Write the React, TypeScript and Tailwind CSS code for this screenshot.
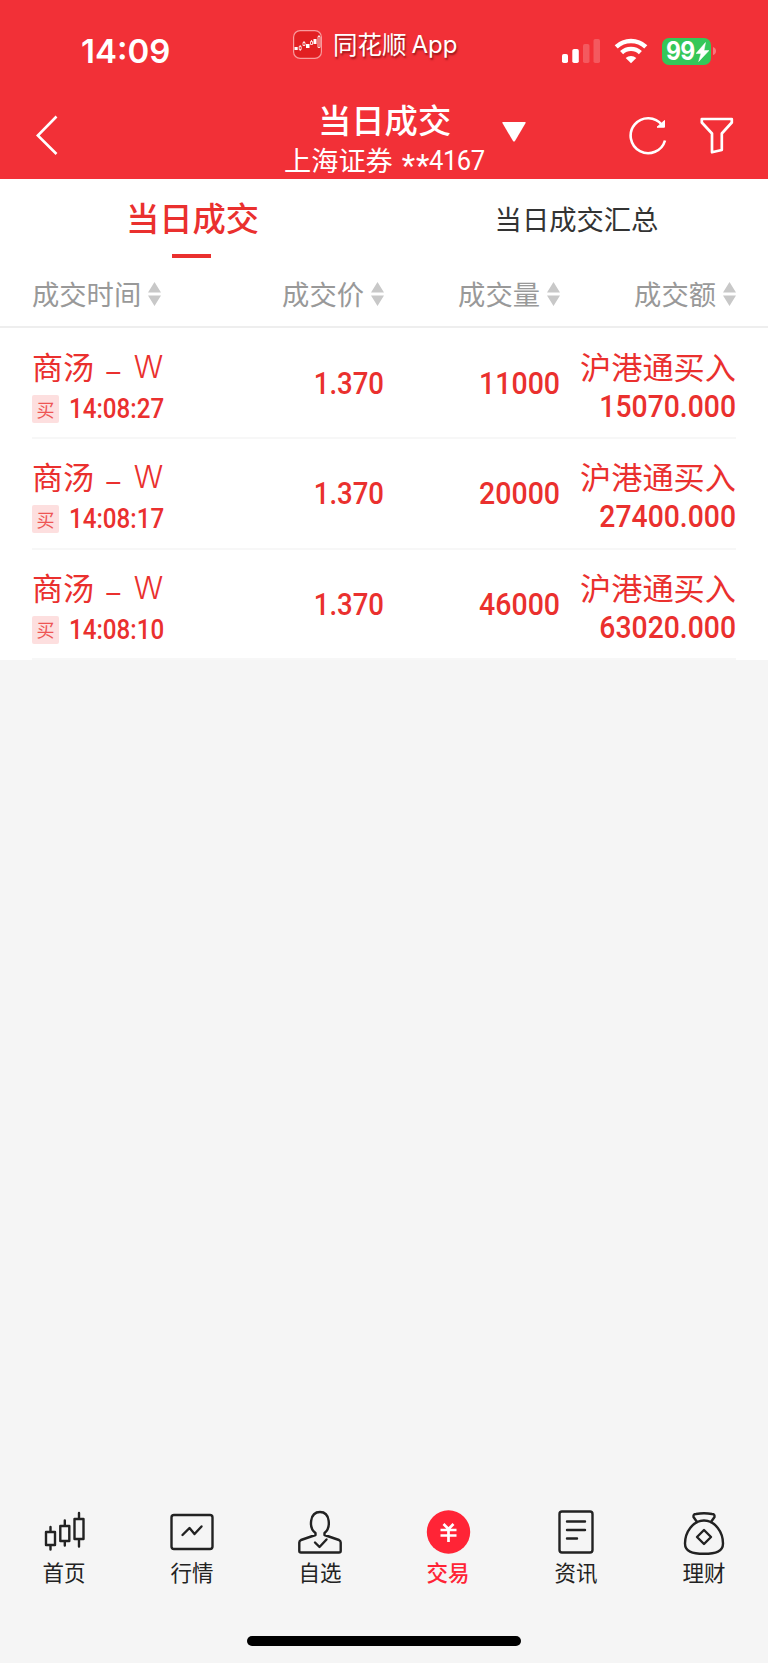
import type { ReactNode } from "react";

const trades = [
  { id: 1, name: "商汤", suffix: "W", time: "14:08:27", price: "1.370", volume: "11000", type: "沪港通买入", amount: "15070.000" },
  { id: 2, name: "商汤", suffix: "W", time: "14:08:17", price: "1.370", volume: "20000", type: "沪港通买入", amount: "27400.000" },
  { id: 3, name: "商汤", suffix: "W", time: "14:08:10", price: "1.370", volume: "46000", type: "沪港通买入", amount: "63020.000" },
];

function StatusBar() {
  return (
    <div className="flex h-[100px] text-white">
      <div className="w-[293px] pl-[81px] pt-[31px] font-['Inter'] text-[33px] leading-[40px] font-semibold">14:09</div>
      <div className="flex w-[269px] pt-[30px]">
        <svg width="29" height="29" viewBox="0 0 29 29" fill="none">
          <rect x="0.6" y="0.6" width="27.8" height="27.8" rx="6.5" fill="#e21f22" stroke="#f99a9c" strokeWidth="1.2" />
          <path d="M1.500 17h3.200v3H1.500zM13 14h3.500v4H13zM20.500 9h3v5h-3z" fill="white" />
          <path d="M6.200 16.500h2v3h-2zM7.200 15v1.500M7.200 19.500v1.500M10 12.500h2v3h-2zM11 11v1.500M17.500 11.500h2v3h-2zM18.500 10v1.500M25 6.500h2v11h-2zM26 5v1.500" stroke="white" strokeWidth="0.8" />
        </svg>
        <div className="flex gap-[5px] pl-[11px] text-[24.5px] leading-[28px] [text-shadow:1px_2px_2px_rgba(70,0,0,0.55)]">
          <span>同花顺</span>
          <span className="font-['Inter'] text-[24px] leading-[30px]">App</span>
        </div>
      </div>
      <svg className="mt-[38px]" width="38" height="26" viewBox="0 0 38 26" fill="white">
        <rect x="0" y="16" width="6" height="9" rx="1.8" />
        <rect x="10.300" y="11" width="6.500" height="14" rx="1.800" />
        <rect x="21" y="6" width="6.500" height="19" rx="1.800" opacity="0.2" />
        <rect x="31.500" y="1" width="6.500" height="24" rx="1.800" opacity="0.2" />
      </svg>
      <svg className="mt-[38px] ml-[14px]" width="34" height="26" viewBox="0 0 34 26" fill="none" stroke="white" strokeWidth="4.400">
        <path d="M2.200 8.900a21.500 21.500 0 0 1 29.600 0" />
        <path d="M7.600 14.600a13.600 13.600 0 0 1 18.800 0" />
        <path d="M11.700 20a8 8 0 0 1 10.600 0L17 25.200z" fill="white" stroke="none" />
      </svg>
      <div className="mt-[38px] ml-[14px] flex h-[27px] w-[49px] items-center rounded-[7px] bg-[#34c759] pl-[4px]">
        <span className="w-[30px] origin-left scale-x-[0.92] font-['Inter'] text-[25px] leading-[27px] font-bold tracking-[-0.8px]">99</span>
        <svg className="shrink-0" width="13" height="20" viewBox="0 0 13 20" fill="white">
          <path d="M9.500 0.500L0 11.500h5L2.700 19.500 13 8.500H8z" stroke="white" strokeWidth="0.5" />
        </svg>
      </div>
      <svg className="mt-[46px] ml-[2px]" width="4" height="10" viewBox="0 0 4 10">
        <path d="M0 1q3 1 3 4t-3 4z" fill="#f8777b" />
      </svg>
    </div>
  );
}

function TitleBar() {
  return (
    <div className="flex h-[79px] text-white">
      <svg className="mt-[15px] ml-[36px]" width="22" height="40" viewBox="0 0 22 40" fill="none" stroke="white" strokeWidth="2.600">
        <path d="M20.500 1.500L1.800 20.500l18.700 18.500" />
      </svg>
      <div className="ml-[226px] w-[200px]">
        <h1 className="-mt-px pl-[34px] text-[33.300px] leading-[40px] font-medium">当日成交</h1>
        <div className="flex gap-[9px] text-[27.200px] leading-[40px] whitespace-nowrap">
          <span>上海证券</span>
          <span className="flex pt-[2px] font-['Roboto']">
            <span className="w-[27px] pt-[5px] text-[31px] leading-[39px] tracking-[0.800px]">**</span>
            <span className="origin-left scale-x-[0.94] tracking-[-0.500px]">4167</span>
          </span>
        </div>
      </div>
      <svg className="mt-[21px] ml-[18px]" width="24" height="21" viewBox="0 0 24 21" fill="white">
        <path d="M1 1h22q1 0 .6 1L13 20q-1 1.200-2 0L.4 2Q0 1 1 1z" />
      </svg>
      <svg className="mt-[16px] ml-[103px]" width="39" height="40" viewBox="0 0 39 40" fill="none" stroke="white" strokeWidth="2.600">
        <path d="M36 24.500A17.500 17.500 0 1 1 33 9" />
        <path d="M35.500 4.500v6.700h-7.500z" fill="white" strokeWidth="1" />
      </svg>
      <svg className="mt-[17px] ml-[32px]" width="34" height="38" viewBox="0 0 34 38" fill="none" stroke="white" strokeWidth="2.700" strokeLinejoin="round">
        <path d="M1.800 2h30v3.500L21.800 16.500V33L12 35.300V16.500L1.800 5.500z" />
      </svg>
    </div>
  );
}

function SortArrows() {
  return (
    <svg className="mt-px" width="13" height="24" viewBox="0 0 13 24" fill="#c8c8c8">
      <path d="M6.500 0L13 10.500H0zM0 13.500h13L6.500 24z" />
    </svg>
  );
}

function Column({ label, className }: { label: string; className: string }) {
  return (
    <div className={`flex items-center gap-[7px] ${className}`}>
      <span>{label}</span>
      <SortArrows />
    </div>
  );
}

function TabItem({ label, active, children }: { label: string; active?: boolean; children: ReactNode }) {
  return (
    <div className={`flex w-32 flex-col items-center ${active ? "font-medium text-[#ff2436]" : "text-[#222]"}`}>
      <svg width="46" height="46" viewBox="0 0 46 46" fill="none" stroke="#222" strokeWidth="2.400" strokeLinejoin="round" strokeLinecap="round">
        {children}
      </svg>
      <span className="text-[21.500px] leading-[32px]">{label}</span>
    </div>
  );
}

export default function App() {
  return (
    <div className="flex h-[1663px] w-[768px] flex-col overflow-hidden bg-[#f5f5f5] font-['Noto_Sans_CJK_SC',sans-serif]">
      <header className="h-[179px] bg-[#f23037]">
        <StatusBar />
        <TitleBar />
      </header>

      <main className="bg-white">
        <div className="flex h-[82px]">
          <div className="flex w-1/2 flex-col items-center text-[#ea302e]">
            <span className="pt-[18px] pl-px text-[33.300px] leading-[40px] font-medium">当日成交</span>
            <span className="mt-[17px] mr-px h-[4px] w-[39px] bg-[#ea302e]" />
          </div>
          <div className="w-1/2 pt-[19px] pl-px text-center text-[27.300px] leading-[40px] text-[#333]">当日成交汇总</div>
        </div>

        <div className="flex h-[67px] items-center border-b-2 border-[#eee] px-8 text-[27.300px] text-[#999]">
          <Column label="成交时间" className="w-[176px]" />
          <Column label="成交价" className="w-[176px] justify-end" />
          <Column label="成交量" className="w-[176px] justify-end" />
          <Column label="成交额" className="w-[176px] justify-end" />
        </div>

        <div className="px-8 pt-px text-[#ea302e]">
          {trades.map((t) => (
            <div key={t.id} className="flex h-[110.300px] border-b-2 border-[#f7f7f7]">
              <div className="w-[176px] pt-[18px]">
                <div className="flex text-[31px] leading-[38px]">
                  <span>{t.name}</span>
                  <span className="pt-[3px] pl-[11px]">–</span>
                  <span className="pl-[12px] pt-px font-['Inter'] text-[30.500px] font-[350]">{t.suffix}</span>
                </div>
                <div className="mt-[7px] flex items-center gap-[10px]">
                  <span className="flex h-[28px] w-[27px] items-center justify-center rounded-[2px] bg-[#fddfdf] text-[18px] text-[#ee5553]">买</span>
                  <span className="origin-left scale-x-[0.895] font-['Roboto'] text-[27px] leading-[28px] font-medium">{t.time}</span>
                </div>
              </div>
              <div className="w-[176px] origin-right scale-x-[0.86] pt-[35px] text-right font-['Roboto'] text-[32px] leading-[38px] font-medium">{t.price}</div>
              <div className="w-[176px] origin-right scale-x-[0.89] pt-[35px] text-right font-['Roboto'] text-[32px] leading-[38px] font-medium">{t.volume}</div>
              <div className="w-[176px] pt-[18px] text-right">
                <div className="text-[31.200px] leading-[38px]">{t.type}</div>
                <div className="mt-[2px] origin-right scale-x-[0.885] font-['Roboto'] text-[32px] leading-[38px] font-medium">{t.amount}</div>
              </div>
            </div>
          ))}
        </div>
      </main>

      <nav className="mt-auto flex h-[153px] flex-col items-center">
        <div className="flex">
          <TabItem label="首页">
            <path d="M5 22h9v13H5zM9.500 17v5M9.500 35v4.500M19.300 16h9v15h-9zM23.800 10.500V16M23.800 31v4.500M33.500 9h9v20h-9zM38 3v6M38 29v7.500" />
          </TabItem>
          <TabItem label="行情">
            <rect x="2.500" y="5" width="41" height="34" rx="2.500" />
            <path d="M13.500 25l7-7 5 6 7-7.500" />
          </TabItem>
          <TabItem label="自选">
            <path d="M18.500 23c-7-5-6-21 4.500-21S34 18 27.500 23v2L42 30q1.700 1 1.700 2.500V41q0 1.500-1.700 1.500H4Q2.300 42.500 2.300 41v-8.500Q2.300 31 4 30l14.500-5z" />
            <path d="M18 32.500l4.500 4.500 7-7.500" />
          </TabItem>
          <TabItem label="交易" active>
            <circle cx="23.500" cy="22" r="21.700" fill="#ff2436" stroke="none" />
            <path d="M18.500 14l5 5 5-5M15.500 20h16M15.500 25.500h16M23.500 19V32" stroke="white" strokeWidth="2.700" strokeLinecap="butt" />
          </TabItem>
          <TabItem label="资讯">
            <rect x="6.500" y="1.500" width="33" height="41" rx="2.500" />
            <path d="M14 11.500h18M14 20h18M14 28.500h10" />
          </TabItem>
          <TabItem label="理财">
            <path d="M16 12l-3.500-5q-.5-3 2.500-3 8-1.500 16 0 3 0 2.500 3L30 12" />
            <path d="M23 10.500c11 0 19 11.500 19 23 0 8-7 10.300-19 10.300S4 41.500 4 33.500c0-11.500 8-23 19-23z" />
            <path d="M23 20l7 7-7 7-7-7z" />
          </TabItem>
        </div>
        <div className="mt-[48px] h-[10px] w-[274px] rounded-full bg-black" />
      </nav>
    </div>
  );
}
